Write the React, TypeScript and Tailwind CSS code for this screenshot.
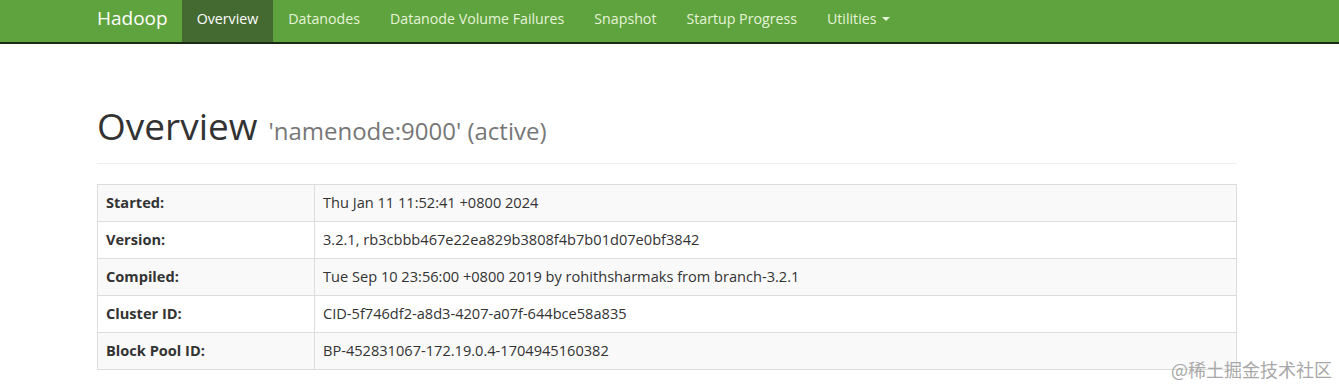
const navItems = ['Datanodes', 'Datanode Volume Failures', 'Snapshot', 'Startup Progress']

const rows = [
	['Started:', 'Thu Jan 11 11:52:41 +0800 2024'],
	['Version:', '3.2.1, rb3cbbb467e22ea829b3808f4b7b01d07e0bf3842'],
	['Compiled:', 'Tue Sep 10 23:56:00 +0800 2019 by rohithsharmaks from branch-3.2.1'],
	['Cluster ID:', 'CID-5f746df2-a8d3-4207-a07f-644bce58a835'],
	['Block Pool ID:', 'BP-452831067-172.19.0.4-1704945160382'],
]

export default function App() {
	return (
		<div className="relative min-h-[389px] bg-white text-[#333] font-['Open_Sans',_'Noto_Sans',_sans-serif] text-[14px]">
			<nav className="h-[44px] bg-[#5fa33e] border-b-2 border-[#1b2a14]">
				<div className="flex h-[42px] items-stretch pl-[97px] text-[14.2px]">
					<span className="flex items-center pb-[5px] pr-[14px] text-[19px] text-white">Hadoop</span>
					<span className="flex items-center pb-[5px] px-[15px] bg-[#446a32] text-white">Overview</span>
					{navItems.map((item) => (
						<span key={item} className="flex items-center pb-[5px] px-[15px] text-[#e6f4d9]">
							{item}
						</span>
					))}
					<span className="flex items-center gap-[6px] pb-[5px] px-[15px] text-[#e6f4d9]">
						Utilities
						<span className="w-0 h-0 border-x-[4px] border-x-transparent border-t-[4px] border-t-[#e6f4d9]" />
					</span>
				</div>
			</nav>

			<div className="pl-[97px] w-[1237px]">
				<div className="mt-[60px] pb-[14px] border-b border-[#eee] flex items-baseline gap-[11px]">
					<h1 className="text-[37px] leading-[44px] text-[#333]">Overview</h1>
					<span className="text-[24px] text-[#777]">'namenode:9000' (active)</span>
				</div>

				<table className="mt-[20px] w-full border-collapse border border-[#ddd] text-[14.6px]">
					<tbody>
						{rows.map(([label, value], i) => (
							<tr key={label} className={i % 2 === 0 ? 'bg-[#f9f9f9]' : 'bg-white'}>
								<th className="w-[217px] h-[37px] px-[8px] text-left font-bold border border-[#ddd]">{label}</th>
								<td className="h-[37px] px-[8px] border border-[#ddd]">{value}</td>
							</tr>
						))}
					</tbody>
				</table>
			</div>

			<span className="absolute right-[7px] bottom-[6px] text-[18px] text-[#a8a8a8] font-['Noto_Sans_CJK_SC',_serif]">
				@稀土掘金技术社区
			</span>
		</div>
	)
}
